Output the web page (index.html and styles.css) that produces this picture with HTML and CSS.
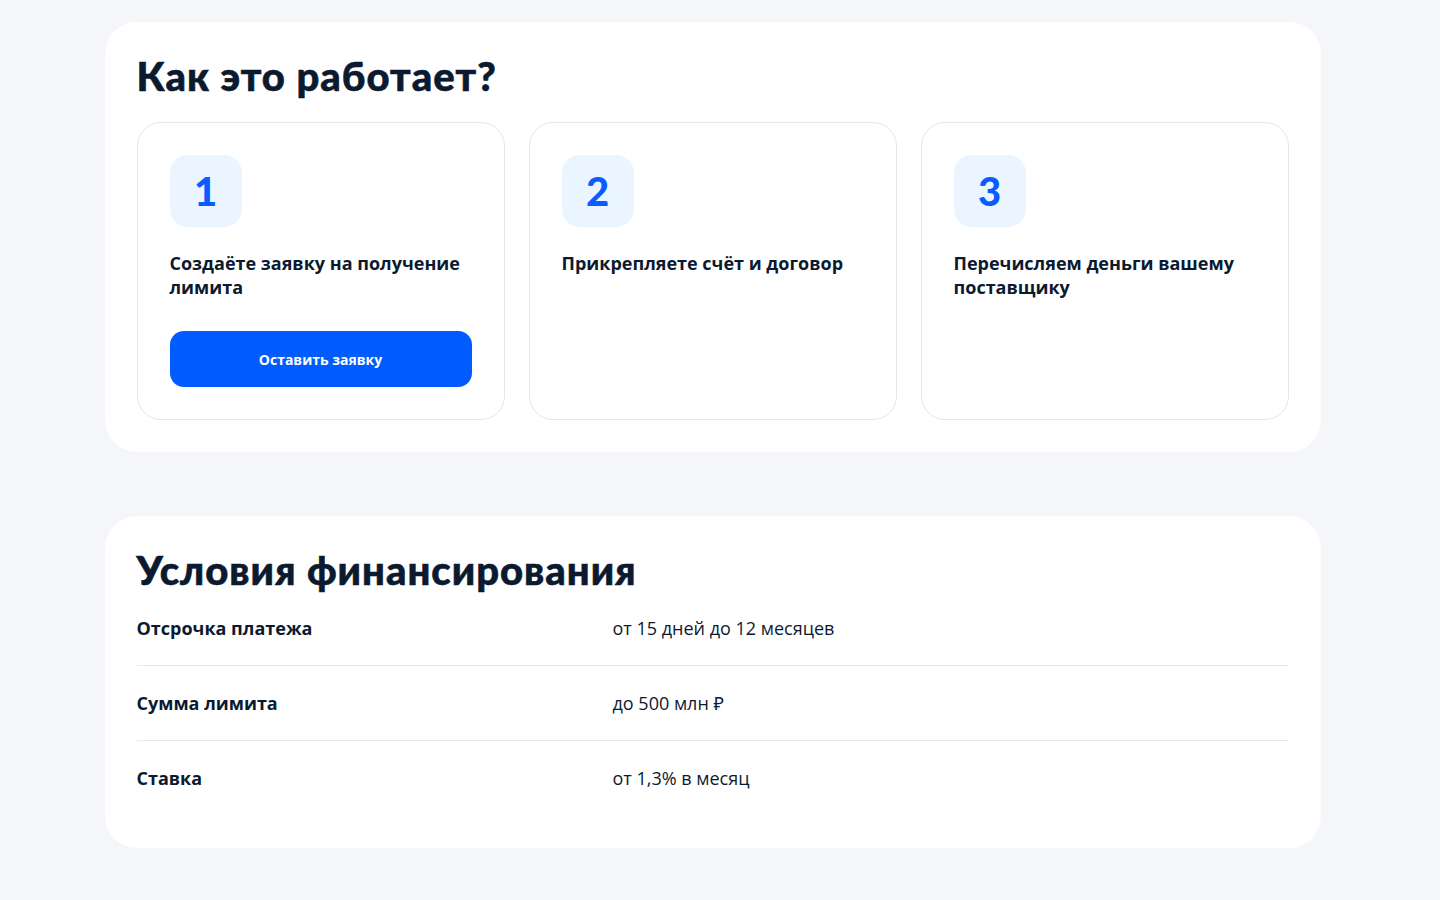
FILE: index.html
```html
<!DOCTYPE html>
<html lang="ru">
<head>
    <meta charset="UTF-8">
    <meta name="viewport" content="width=device-width, initial-scale=1.0">
    <title>Финансирование поставок</title>
    <link rel="stylesheet" href="styles.css">
</head>
<body>
    <main class="page">
        <section class="block">
            <h2 class="block-title">Как это работает?</h2>
            <div class="steps">
                <div class="step">
                    <div class="step-num">1</div>
                    <p class="step-text">Создаёте заявку на получение лимита</p>
                    <button class="btn-primary">Оставить заявку</button>
                </div>
                <div class="step">
                    <div class="step-num">2</div>
                    <p class="step-text">Прикрепляете счёт и договор</p>
                </div>
                <div class="step">
                    <div class="step-num">3</div>
                    <p class="step-text">Перечисляем деньги вашему поставщику</p>
                </div>
            </div>
        </section>

        <section class="block">
            <h2 class="block-title">Условия финансирования</h2>
            <div class="terms">
                <div class="term-row">
                    <div class="term-name">Отсрочка платежа</div>
                    <div class="term-value">от 15 дней до 12 месяцев</div>
                </div>
                <div class="term-row">
                    <div class="term-name">Сумма лимита</div>
                    <div class="term-value">до 500 млн ₽</div>
                </div>
                <div class="term-row">
                    <div class="term-name">Ставка</div>
                    <div class="term-value">от 1,3% в месяц</div>
                </div>
            </div>
        </section>
    </main>
</body>
</html>
```

FILE: styles.css
```css
* {
    margin: 0;
    padding: 0;
    box-sizing: border-box;
}

body {
    background-color: #f5f6f9;
    font-family: "Open Sans", "Noto Sans", sans-serif;
    color: #0b1a2f;
    /* место под полосу прокрутки */
    padding-right: 15px;
}

.page {
    width: 1216px;
    margin: 0 auto;
    padding: 22px 0 52px;
    display: flex;
    flex-direction: column;
    gap: 64px;
}

.block {
    background: #fff;
    border-radius: 32px;
    padding: 32px;
}

.block-title {
    font-family: Lato, "Open Sans", sans-serif;
    font-size: 40px;
    line-height: 44px;
    font-weight: 900;
    letter-spacing: 1px;
    -webkit-text-stroke: 0.6px #0b1a2f;
}

/* шаги */
.steps {
    margin-top: 24px;
    display: grid;
    grid-template-columns: repeat(3, 1fr);
    gap: 24px;
}

.step {
    height: 298px;
    border: 1px solid #e4e7eb;
    border-radius: 24px;
    padding: 32px;
}

.step-num {
    width: 72px;
    height: 72px;
    border-radius: 18px;
    background-color: #eaf5ff;
    color: #0a5cff;
    font-family: Lato, sans-serif;
    font-size: 40px;
    font-weight: 900;
    display: flex;
    align-items: center;
    justify-content: center;
}

.step-text {
    margin-top: 24px;
    font-size: 18px;
    line-height: 24px;
    font-weight: 700;
}

.btn-primary {
    margin-top: 32px;
    width: 302px;
    height: 56px;
    border: none;
    border-radius: 14px;
    background-color: #005cff;
    color: #fff;
    font-family: inherit;
    font-size: 14px;
    font-weight: 700;
    cursor: pointer;
}

/* условия */
.term-row {
    display: grid;
    grid-template-columns: 476px 1fr;
    padding: 25px 0;
    border-bottom: 1px solid #e4e7eb;
    font-size: 18px;
    line-height: 24px;
}

.term-row:first-child {
    padding-top: 24px;
}

.term-row:last-child {
    padding-bottom: 26px;
    border-bottom: none;
}

.term-name {
    font-weight: 700;
}

.term-value {
    font-weight: 400;
}
```
